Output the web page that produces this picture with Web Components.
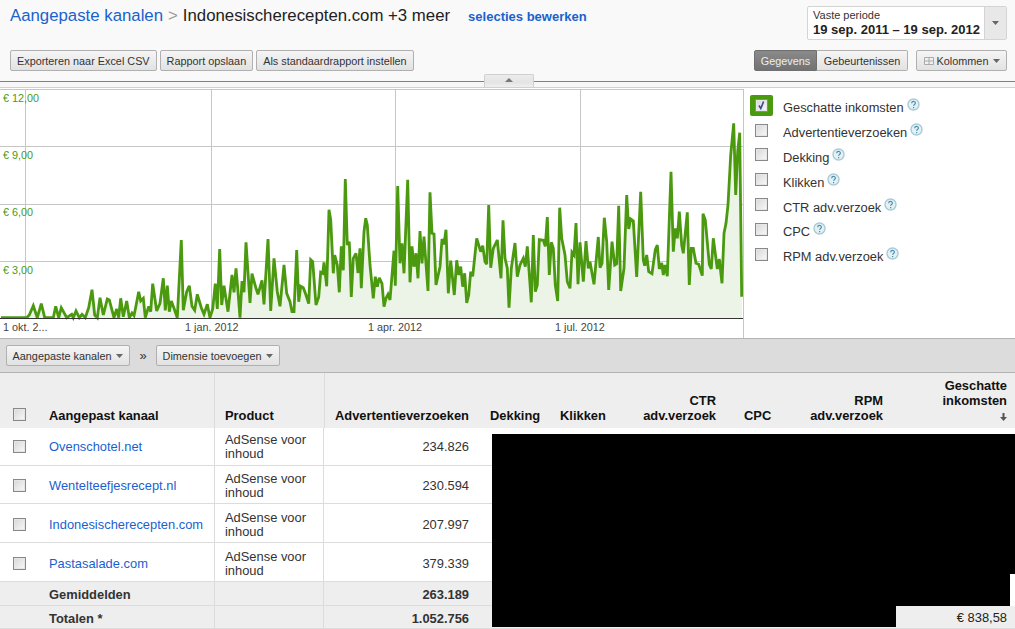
<!DOCTYPE html>
<html>
<head>
<meta charset="utf-8">
<title>Aangepaste kanalen</title>
<style>
  html, body { margin: 0; padding: 0; background: #fff; }
  body { font-family: "Liberation Sans", Arial, sans-serif; overflow: hidden; }
</style>
</head>
<body>
<report-page>
  <report-header slot="header">
    <ad-button slot="left">Exporteren naar Excel CSV</ad-button>
    <ad-button slot="left">Rapport opslaan</ad-button>
    <ad-button slot="left">Als standaardrapport instellen</ad-button>
  </report-header>
  <chart-panel slot="chart">
    <trend-chart slot="plot"></trend-chart>
    <metric-item checked>Geschatte inkomsten</metric-item>
    <metric-item>Advertentieverzoeken</metric-item>
    <metric-item>Dekking</metric-item>
    <metric-item>Klikken</metric-item>
    <metric-item>CTR adv.verzoek</metric-item>
    <metric-item>CPC</metric-item>
    <metric-item>RPM adv.verzoek</metric-item>
  </chart-panel>
  <dimension-bar slot="bar"></dimension-bar>
  <report-table slot="table"></report-table>
</report-page>

<script>
const caret = `<svg width="7" height="4" viewBox="0 0 7 4" style="display:block"><path d="M0 0h7L3.500 4z" fill="#666"/></svg>`;

class AdButton extends HTMLElement {
  constructor() {
    super();
    this.attachShadow({ mode: "open" });
    this.shadowRoot.innerHTML = `
      <style>
        :host {
          display: inline-flex;
          align-items: center;
          justify-content: center;
          gap: 5px;
          box-sizing: border-box;
          height: 21px;
          padding: 0 6px;
          font-size: 10.85px;
          color: #333;
          white-space: nowrap;
          border: 1px solid #b0b0b0;
          border-radius: 2px;
          background: linear-gradient(#f5f5f5, #e2e2e2);
        }
        :host([active]) {
          color: #eee;
          border-color: #6f6f6f;
          background: linear-gradient(#8a8a8a, #727272);
        }
      </style>
      <slot name="icon"></slot><slot></slot><slot name="caret"></slot>
    `;
  }
}

class ReportHeader extends HTMLElement {
  constructor() {
    super();
    this.attachShadow({ mode: "open" });
    this.shadowRoot.innerHTML = `
      <style>
        :host {
          display: block;
          box-sizing: border-box;
          height: 82px;
          position: relative;
          z-index: 1;
          background: #f9f9f9;
          border-bottom: 1px solid #5b85c4;
        }
        .top {
          display: flex;
          justify-content: space-between;
          height: 44px;
          padding: 6px 8px 0 10px;
          box-sizing: border-box;
        }
        .title { display: flex; align-items: baseline; height: 22px; font-size: 16.8px; line-height: 20px; color: #222; }
        .crumb { color: #1a62cc; }
        .sep { color: #999; margin: 0 5px; }
        .edit { color: #1a62cc; font-size: 13px; font-weight: bold; margin-left: 18px; }
        .date {
          box-sizing: border-box;
          width: 200px;
          height: 34px;
          display: flex;
          background: #fff;
          border: 1px solid #d4d4d4;
          border-radius: 2px;
        }
        .date .txt { flex: 1; padding: 2px 0 0 5px; font-size: 11px; line-height: 13px; color: #333; }
        .date b { display: block; font-size: 13px; line-height: 15px; color: #222; }
        .date .drop {
          width: 21px;
          display: flex;
          align-items: center;
          justify-content: center;
          background: #e8e8e8;
          border-left: 1px solid #d4d4d4;
        }
        .row {
          display: flex;
          justify-content: space-between;
          padding: 6px 8px 0 10px;
        }
        .left { display: flex; gap: 3px; }
        .right { display: flex; }
        .seg { display: flex; margin-right: 8px; }
        .gegevens { width: 63px; border-radius: 2px 0 0 2px; }
        .gebeurtenissen { width: 91px; border-left: 0; border-radius: 0 2px 2px 0; }
        .kolommen { width: 91px; gap: 3px; padding: 0 5px 0 6px; }
        .kolommen span { margin-left: 2px; }
        .tab {
          position: absolute;
          left: 484px;
          top: 74px;
          width: 50px;
          height: 13px;
          box-sizing: border-box;
          padding-top: 3px;
          background: linear-gradient(#ececec, #e4e4e4 60%, #efefef);
          border: 1px solid #d0d0d0;
          border-bottom: 0;
          border-radius: 2px 2px 0 0;
          display: flex;
          align-items: flex-start;
          justify-content: center;
        }
      </style>
      <div class="top">
        <div class="title">
          <span class="crumb">Aangepaste kanalen</span><span class="sep">&gt;</span><span>Indonesischerecepten.com +3 meer</span><span class="edit">selecties bewerken</span>
        </div>
        <div class="date">
          <div class="txt">Vaste periode<b>19 sep. 2011 – 19 sep. 2012</b></div>
          <div class="drop">${caret}</div>
        </div>
      </div>
      <div class="row">
        <div class="left"><slot name="left"></slot></div>
        <div class="right">
          <div class="seg">
            <ad-button class="gegevens" active>Gegevens</ad-button><ad-button class="gebeurtenissen">Gebeurtenissen</ad-button>
          </div>
          <ad-button class="kolommen">
            <svg slot="icon" width="10" height="8" viewBox="0 0 10 8"><path d="M.5.5h9v7h-9zM5 .5v7M.5 4h9" fill="#f0f0f0" stroke="#aaa"/></svg>
            Kolommen
            <span slot="caret">${caret}</span>
          </ad-button>
        </div>
      </div>
      <div class="tab"><svg width="8" height="4" viewBox="0 0 8 4"><path d="M0 4h8L4 0z" fill="#777"/></svg></div>
    `;
  }
}

const leftPts = [[3,698],[80,698],[88,690],[100,662],[112,698],[124,656],[134,698],[160,698],[167,664],[176,698],[184,668],[200,698],[215,688],[220,698],[228,678],[238,698],[246,688],[256,698],[266,668],[276,614],[284,690],[292,698],[300,638],[310,690],[322,642],[328,645],[342,698],[350,672],[356,698],[362,640],[370,695],[380,648],[388,698],[396,684],[402,692],[408,662],[416,620],[422,648],[430,640],[436,698],[446,664],[452,680],[458,596],[470,678],[480,655],[490,580],[496,676],[502,602],[508,680],[514,648],[522,670],[532,698],[544,465],[550,676],[560,620],[568,602],[576,664],[584,676],[592,628],[604,668],[612,688],[622,658],[630,698],[638,672],[646,596],[652,672],[659,492],[665,660],[672,602],[684,680],[696,570],[702,622],[708,550],[714,620],[720,698],[726,588],[732,622],[738,472],[750,654],[756,566],[768,610],[774,628],[786,586],[792,658],[804,462],[812,678],[822,520],[832,620],[840,664],[852,540],[860,625],[870,650],[876,680],[882,680],[890,495],[896,650],[902,604],[910,608],[918,630],[926,656],[932,524],[938,530],[948,660],[956,636],[962,562],[968,565],[972,532],[980,604],[987,374],[992,404],[1000,565],[1004,510],[1012,540],[1018,622],[1024,484],[1030,556],[1036,282],[1042,480],[1048,470],[1054,636],[1060,520],[1068,505],[1074,564],[1080,490],[1084,610],[1092,440],[1097,400],[1102,420],[1110,540],[1120,640]];
const rightPts = [[16,575],[22,605],[28,578],[36,596],[42,665],[48,640],[54,628],[60,645],[72,497],[76,602],[83,303],[90,535],[96,475],[102,565],[113,284],[120,592],[126,484],[132,545],[138,505],[144,580],[150,438],[156,535],[162,455],[174,618],[180,322],[186,445],[192,447],[198,600],[210,545],[216,462],[222,478],[228,434],[235,625],[242,527],[253,630],[260,526],[266,570],[272,545],[278,605],[284,565],[290,654],[296,630],[302,560],[308,574],[320,460],[332,500],[338,482],[345,530],[350,538],[356,360],[362,548],[370,490],[382,465],[393,580],[399,406],[405,520],[412,550],[417,668],[424,550],[435,474],[442,575],[450,540],[460,520],[466,545],[472,484],[484,652],[490,450],[496,620],[502,600],[508,464],[520,466],[526,484],[532,396],[538,570],[544,472],[550,490],[556,600],[563,648],[569,368],[575,460],[585,510],[592,590],[600,610],[606,502],[612,510],[618,414],[624,598],[630,472],[640,590],[648,468],[655,550],[660,530],[672,598],[685,456],[690,548],[696,535],[703,398],[710,470],[716,615],[726,470],[734,540],[740,536],[746,362],[752,618],[762,550],[770,330],[776,432],[782,402],[790,408],[800,576],[812,320],[820,525],[824,542],[830,510],[836,560],[846,566],[856,494],[862,480],[868,552],[875,534],[880,570],[885,540],[892,574],[903,260],[910,500],[916,430],[922,460],[928,380],[935,480],[940,505],[952,382],[958,600],[964,490],[970,490],[978,535],[986,538],[997,572],[999,386],[1006,405],[1018,538],[1024,552],[1030,460],[1042,552],[1048,522],[1056,595],[1062,445],[1068,415],[1074,360],[1082,210],[1091,115],[1097,330],[1103,200],[1109,143],[1115,635]];

class TrendChart extends HTMLElement {
  constructor() {
    super();
    this.attachShadow({ mode: "open" });
    // zoom coordinates -> svg coordinates (svg top is y=89 on the page)
    const top = 89;
    const conv = (p, off) => [(p[0] / 3 + off).toFixed(1), (p[1] / 3 + 85 - top).toFixed(1)];
    const pts = leftPts.map(p => conv(p, 0)).concat(rightPts.map(p => conv(p, 370)));
    const line = pts.map(p => p.join(",")).join(" ");
    const base = 229;
    const area = `0,${base} ${line} 742,${base}`;
    const hLines = [0, 57, 115, 172].map(y => `<line x1="0" x2="743" y1="${y + 0.5}" y2="${y + 0.5}"/>`).join("");
    const vLines = [25, 211, 395, 580].map(x => `<line y1="0" y2="229" x1="${x + 0.5}" x2="${x + 0.5}"/>`).join("");
    const yLabels = [["€ 12,00", 13], ["€ 9,00", 70], ["€ 6,00", 127], ["€ 3,00", 185]]
      .map(l => `<text x="3" y="${l[1]}" fill="#4a9a10">${l[0]}</text>`).join("");
    const xLabels = [["1 okt. 2...", 3], ["1 jan. 2012", 185], ["1 apr. 2012", 368], ["1 jul. 2012", 555]]
      .map(l => `<text x="${l[1]}" y="242" fill="#444">${l[0]}</text>`).join("");
    this.shadowRoot.innerHTML = `
      <style>
        :host { display: block; width: 743px; height: 249px; }
        svg { display: block; font-family: "Liberation Sans", Arial, sans-serif; font-size: 10.8px; }
        .grid line { stroke: #c6c6c6; stroke-width: 1; }
      </style>
      <svg width="743" height="249" viewBox="0 0 743 249">
        <g class="grid">${hLines}${vLines}</g>
        <polygon points="${area}" fill="#ecf3e7"/>
        <g class="grid"><line x1="25.5" x2="25.5" y1="0" y2="229"/></g>
        <polyline points="${line}" fill="none" stroke="#4a990f" stroke-width="2.8" stroke-linejoin="miter" stroke-miterlimit="3"/>
        <line x1="0" x2="743" y1="229.5" y2="229.5" stroke="#333"/>
        ${yLabels}
        ${xLabels}
      </svg>
    `;
  }
}

class AdCheck extends HTMLElement {
  constructor() {
    super();
    this.attachShadow({ mode: "open" });
    this.shadowRoot.innerHTML = `
      <style>
        :host { display: block; width: 13px; height: 13px; }
        svg { display: block; }
        .tick { display: none; }
        :host([checked]) .tick { display: inline; }
      </style>
      <svg width="13" height="13" viewBox="0 0 13 13">
        <rect x=".5" y=".5" width="12" height="12" fill="#f0f0f0" stroke="#888"/>
        <rect x="1.5" y="1.5" width="10" height="10" fill="url(#g)" stroke="#e6e6e6"/>
        <defs><linearGradient id="g" x1="0" y1="0" x2="1" y2="1"><stop offset="0" stop-color="#d8d8d8"/><stop offset="1" stop-color="#f8f8f8"/></linearGradient></defs>
        <path class="tick" d="M4 6.500l1.800 3 2.800-7" fill="none" stroke="#3c4a8c" stroke-width="1.600"/>
      </svg>
    `;
  }
}

class MetricItem extends HTMLElement {
  constructor() {
    super();
    this.attachShadow({ mode: "open" });
    this.shadowRoot.innerHTML = `
      <style>
        :host {
          display: flex;
          align-items: center;
          height: 24.8px;
          font-size: 12.85px;
          color: #333;
          white-space: nowrap;
        }
        .box { width: 23px; height: 21px; margin: 0 10px 0 6px; display: flex; align-items: center; justify-content: center; border-radius: 2px; }
        :host([checked]) .box { background: #4a9a10; }
        .label { padding-top: 5px; }
        .help { margin: -1px 0 0 3px; display: block; }
      </style>
      <span class="box"><ad-check></ad-check></span>
      <span class="label"><slot></slot></span>
      <svg class="help" width="13" height="13" viewBox="0 0 13 13">
        <circle cx="6.500" cy="6.500" r="5.500" fill="#e4f0f4" stroke="#a9cbd6" stroke-width="1.400"/>
        <path d="M4.700 5.200c0-2.300 3.700-2.300 3.700-.1 0 1.300-1.800 1.400-1.800 2.700M6.600 9v1.300" fill="none" stroke="#4a8fb0" stroke-width="1.200"/>
      </svg>
    `;
    if (this.hasAttribute("checked")) this.shadowRoot.querySelector("ad-check").setAttribute("checked", "");
  }
}

class ChartPanel extends HTMLElement {
  constructor() {
    super();
    this.attachShadow({ mode: "open" });
    this.shadowRoot.innerHTML = `
      <style>
        :host {
          display: flex;
          box-sizing: border-box;
          height: 256px;
          padding-top: 7px;
          background: #fff;
          position: relative;
        }
        .strip { position: absolute; left: 0; right: 0; top: 0; height: 5px; background: #f7f7f7; border-bottom: 1px solid #d0d0d0; }
        .list { flex: 1; padding-top: 4px; border-left: 1px solid #c6c6c6; }
      </style>
      <div class="strip"></div>
      <slot name="plot"></slot>
      <div class="list"><slot></slot></div>
    `;
  }
}

class DimensionBar extends HTMLElement {
  constructor() {
    super();
    this.attachShadow({ mode: "open" });
    this.shadowRoot.innerHTML = `
      <style>
        :host {
          display: flex;
          align-items: center;
          box-sizing: border-box;
          height: 35px;
          padding: 0 6px;
          background: #dcdcdc;
          border-top: 1px solid #b4b4b4;
          border-bottom: 1px solid #b4b4b4;
          font-size: 11px;
          color: #333;
        }
        ad-button { width: 124px; }
        .sep { width: 26px; text-align: center; font-size: 13px; }
      </style>
      <ad-button>Aangepaste kanalen<span slot="caret">${caret}</span></ad-button>
      <span class="sep">»</span>
      <ad-button>Dimensie toevoegen<span slot="caret">${caret}</span></ad-button>
    `;
  }
}

class ReportTable extends HTMLElement {
  constructor() {
    super();
    this.attachShadow({ mode: "open" });
    const rows = [
      ["Ovenschotel.net", "234.826", 38, 0],
      ["Wentelteefjesrecept.nl", "230.594", 38, 2],
      ["Indonesischerecepten.com", "207.997", 39, 2],
      ["Pastasalade.com", "379.339", 39, 2],
    ];
    const body = rows.map(r => `
      <div class="row" style="height:${r[2]}px;--p:${r[3]}px">
        <div class="c chk"><ad-check></ad-check></div>
        <div class="c name"><a>${r[0]}</a></div>
        <div class="c prod">AdSense voor inhoud</div>
        <div class="c num">${r[1]}</div>
      </div>`).join("");
    this.shadowRoot.innerHTML = `
      <style>
        :host { display: block; position: relative; height: 256px; overflow: hidden; font-size: 12.9px; color: #333; }
        .head, .row, .sum { display: grid; grid-template-columns: 49px 165px 110px 156px 1fr; }
        .head {
          height: 55px;
          background: #eee;
          font-weight: bold;
          color: #111;
        }
        .head > div { padding-bottom: 5px; line-height: 15px; display: flex; align-items: flex-end; box-sizing: border-box; }
        .head .sep { border-left: 1px solid #dcdcdc; padding-left: 10px; }
        .head .chk { padding-bottom: 7px; padding-left: 13px; }
        .head .num { justify-content: flex-end; padding-right: 11px; }
        .row { border-bottom: 1px solid #dcdcdc; box-sizing: border-box; }
        .c { display: flex; align-items: center; box-sizing: border-box; padding-top: var(--p, 0); }
        .chk { padding-left: 13px; }
        .name a { color: #1a5fd0; }
        .prod {
          border-left: 1px solid #dcdcdc;
          border-right: 1px solid #dcdcdc;
          padding: calc(var(--p, 0px) + 1px) 10px 0;
          line-height: 14px;
        }
        .num { justify-content: flex-end; padding-right: 11px; }
        .sum { background: #eee; font-weight: bold; border-bottom: 1px solid #dcdcdc; box-sizing: border-box; --p: 2px; }
        .cols { position: absolute; left: 0; right: 0; top: 0; height: 55px; font-weight: bold; color: #111; line-height: 15px; }
        .cols div { position: absolute; bottom: 5px; text-align: right; }
        .cols svg { display: inline-block; vertical-align: -1px; }
        .redact { position: absolute; background: #000; }
        .total {
          position: absolute; left: 896px; right: 0; top: 233px; height: 21px;
          background: #eee; text-align: right; padding-right: 8px; box-sizing: border-box;
          line-height: 24px; color: #222;
        }
        .gap { position: absolute; background: #fff; }
      </style>
      <div class="head">
        <div class="chk"><ad-check></ad-check></div>
        <div>Aangepast kanaal</div>
        <div class="sep">Product</div>
        <div class="sep num">Advertentieverzoeken</div>
        <div></div>
      </div>
      <div class="cols">
        <div style="left:490px">Dekking</div>
        <div style="left:560px">Klikken</div>
        <div style="right:299px">CTR<br>adv.verzoek</div>
        <div style="left:744px">CPC</div>
        <div style="right:132px">RPM<br>adv.verzoek</div>
        <div style="right:8px">Geschatte<br>inkomsten<br><svg width="7" height="8" viewBox="0 0 7 8"><path d="M2.500 0h2v4H7L3.500 8 0 4h2.500z" fill="#555"/></svg></div>
      </div>
      ${body}
      <div class="sum" style="height:24px">
        <div class="c"></div><div class="c">Gemiddelden</div><div class="c prod"></div><div class="c num">263.189</div>
      </div>
      <div class="sum" style="height:23px">
        <div class="c"></div><div class="c">Totalen *</div><div class="c prod"></div><div class="c num">1.052.756</div>
      </div>
      <div class="redact" style="left:492px;right:0;top:61px;height:140px"></div>
      <div class="redact" style="left:492px;width:518px;top:201px;height:32px"></div>
      <div class="redact" style="left:492px;width:404px;top:233px;height:21px"></div>
      <div class="gap" style="left:1010px;right:0;top:201px;height:32px"></div>
      <div class="total">€ 838,58</div>
    `;
  }
}

class ReportPage extends HTMLElement {
  constructor() {
    super();
    this.attachShadow({ mode: "open" });
    this.shadowRoot.innerHTML = `
      <style>
        :host { display: block; width: 1015px; height: 629px; overflow: hidden; }
      </style>
      <slot name="header"></slot>
      <slot name="chart"></slot>
      <slot name="bar"></slot>
      <slot name="table"></slot>
    `;
  }
}

customElements.define("ad-button", AdButton);
customElements.define("ad-check", AdCheck);
customElements.define("report-header", ReportHeader);
customElements.define("trend-chart", TrendChart);
customElements.define("metric-item", MetricItem);
customElements.define("chart-panel", ChartPanel);
customElements.define("dimension-bar", DimensionBar);
customElements.define("report-table", ReportTable);
customElements.define("report-page", ReportPage);
</script>
</body>
</html>
